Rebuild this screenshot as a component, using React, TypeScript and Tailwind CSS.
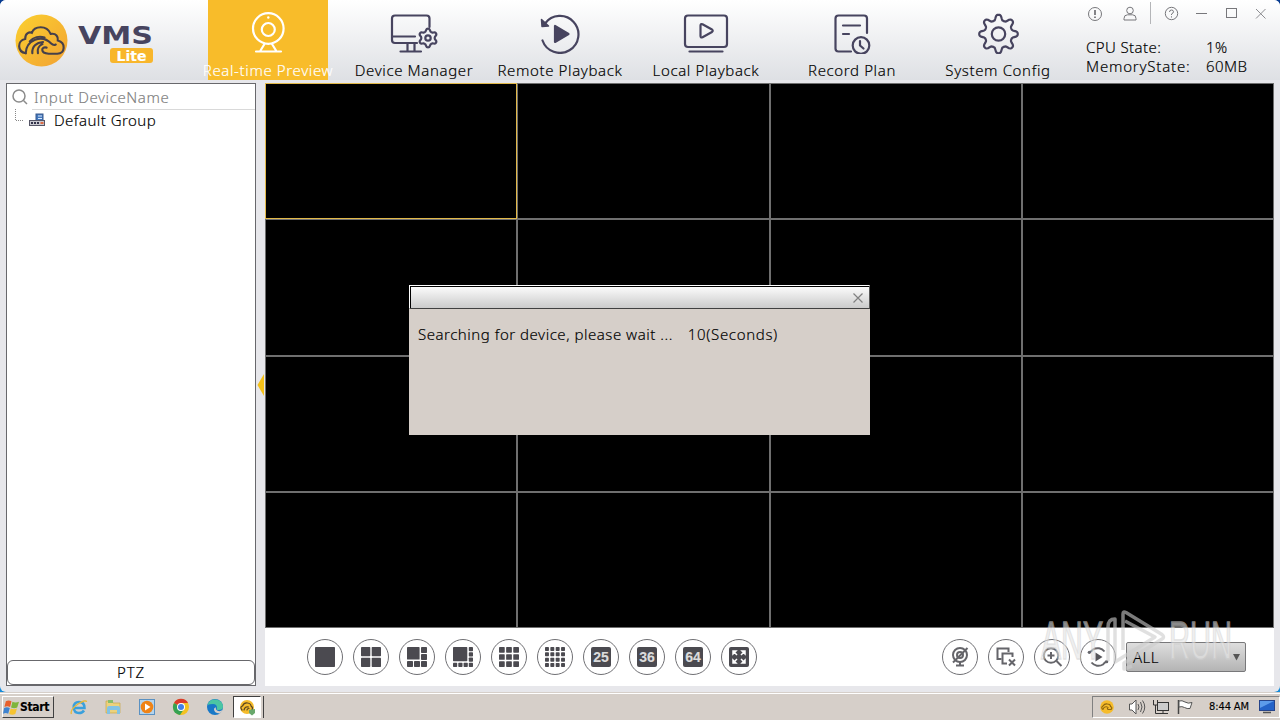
import type { ReactNode } from 'react'
import clsx from 'clsx'

const INK = '#47445f'
const TOOL = '#4b4a50'

// Rounded gear outline: radius swings between mid - amp and mid + amp once per tooth.
function gearPath(cx: number, cy: number, teeth: number, mid: number, amp: number, sharp: number) {
  const pts: string[] = []
  const steps = teeth * 16
  for (let i = 0; i < steps; i++) {
    const a = (i / steps) * Math.PI * 2
    const wave = Math.tanh(sharp * (Math.cos(teeth * a) - 0.15)) / Math.tanh(sharp)
    const r = mid + amp * wave
    pts.push(`${(cx + Math.sin(a) * r).toFixed(2)} ${(cy - Math.cos(a) * r).toFixed(2)}`)
  }
  return `M${pts.join('L')}Z`
}

/* ---------- Header icons (48x44 box) ---------- */

function NavSvg({ color = INK, children }: { color?: string; children: ReactNode }) {
  return (
    <svg
      width="48"
      height="44"
      viewBox="0 0 48 44"
      fill="none"
      stroke={color}
      strokeWidth="2.200"
      strokeLinecap="round"
      strokeLinejoin="round"
    >
      {children}
    </svg>
  )
}

const previewIcon = (
  <NavSvg color="#fff">
    <circle cx="24.300" cy="18.500" r="15.300" />
    <circle cx="24.300" cy="19.500" r="6.500" />
    <path d="M20.500 34L16.500 40.500M28 34L32 40.500M12 41.500H37" />
    <circle cx="24.300" cy="7.500" r="1.200" fill="#fff" stroke="none" />
  </NavSvg>
)

const managerIcon = (
  <NavSvg>
    <path d="M39.500 17V8.500Q39.500 5.500 36.500 5.500H5Q2 5.500 2 8.500V30Q2 33 5 33H27" />
    <path d="M2 26.500H25M17.500 33V41M24.500 33V41M10.500 41.500H31" />
    <path d={gearPath(38, 28, 6, 8.1, 1.3, 1.2)} />
    <circle cx="38" cy="28" r="2.700" />
  </NavSvg>
)

const remoteIcon = (
  <NavSvg>
    <path d="M9 13.500A18.500 18.500 0 1 1 6.500 30.500" />
    <path d="M5.500 9.500L6 16.500L12.500 16Z" fill={INK} strokeWidth="1.500" />
    <path d="M19 16V32L32.500 24Z" fill={INK} />
  </NavSvg>
)

const localIcon = (
  <NavSvg>
    <rect x="3" y="5.500" width="42" height="31.500" rx="3" />
    <path d="M7.500 41.500H40.500" />
    <path d="M18.500 15.500Q18.500 13.500 20.500 14.200L30 19.500Q31.500 20.800 30 22L20.500 27.300Q18.500 28 18.500 26Z" />
  </NavSvg>
)

const planIcon = (
  <NavSvg>
    <path d="M39 23V8.500Q39 5.500 36 5.500H10.500Q7.500 5.500 7.500 8.500V38.500Q7.500 41.500 10.500 41.500H23" />
    <path d="M15 15.500H32M15 24H21" />
    <circle cx="33" cy="35.500" r="8.300" />
    <path d="M32 31V35.500L35.500 38.500" />
  </NavSvg>
)

const configIcon = (
  <NavSvg>
    <path d={gearPath(24.5, 24, 8, 16.7, 2.7, 1.6)} />
    <circle cx="24.500" cy="24" r="6.700" />
  </NavSvg>
)

const navItems = [
  { label: 'Real-time Preview', icon: previewIcon, active: true },
  { label: 'Device Manager', icon: managerIcon },
  { label: 'Remote Playback', icon: remoteIcon },
  { label: 'Local Playback', icon: localIcon },
  { label: 'Record Plan', icon: planIcon },
  { label: 'System Config', icon: configIcon },
]

function CloudWave({ size, color = '#47404a' }: { size: number; color?: string }) {
  return (
    <svg width={size} height={size} viewBox="0 0 52 52" fill="none">
      <defs>
        <linearGradient id="logo" x1="0" y1="0" x2="1" y2="1">
          <stop offset="0" stopColor="#fbd02f" />
          <stop offset="1" stopColor="#f2a233" />
        </linearGradient>
      </defs>
      <circle cx="26" cy="26" r="25.500" fill="url(#logo)" />
      <g stroke={color} strokeWidth="2.100" strokeLinecap="round">
        <path d="M10.500 38.500C2 37 2 26 10 24.500C10 18 14.500 17.500 16.500 18.500C19 11.500 31 10.500 35 19.500C40.500 18.500 42.500 22.500 42 26C50 28 49.500 39 41.500 39H33C24.500 38.500 25.500 31.500 31 33" />
        <path d="M10.500 38.500C11 26 26 19 35.500 29C37 30.500 39 30.500 40 30" />
        <path d="M17 38.500C16.500 32 21 28 27.500 27.500M22.500 38.500C21.500 34.500 23.500 31 27 29.500" />
        <path d="M14.500 27C18 22.500 24 21.500 29 23" />
      </g>
    </svg>
  )
}

function Logo() {
  return (
    <div className="flex w-[195px] shrink-0 pl-[15px] pt-[14px]">
      <CloudWave size={53} />
      <div className="ml-[9px] flex w-[77px] flex-col items-end pt-[7px]">
        <svg width="77" height="26" viewBox="0 0 77 26">
          <text
            x="1"
            y="22.500"
            textLength="75"
            lengthAdjust="spacingAndGlyphs"
            fill={INK}
            fontFamily="DejaVu Sans"
            fontWeight="700"
            fontSize="25"
          >
            VMS
          </text>
        </svg>
        <div className="mt-px mr-px flex h-[15px] w-[43px] items-center justify-center rounded-[3px] bg-[#f8b62b] font-['DejaVu_Sans'] text-[14px] leading-none font-bold text-white">
          Lite
        </div>
      </div>
    </div>
  )
}

function WindowControls() {
  return (
    <svg
      width="190"
      height="26"
      viewBox="0 0 190 26"
      fill="none"
      stroke="#77777b"
      strokeWidth="1"
      className="block"
    >
      <circle cx="14" cy="14" r="6.500" />
      <path d="M14 10V15M14 16.500V18" strokeWidth="1.800" />
      <circle cx="49" cy="10.500" r="3.300" />
      <path d="M43 20V18.500Q43 14.800 46.500 14.800H51.500Q55 14.800 55 18.500V20Z" />
      <path d="M69.500 2V24" stroke="#b4b5b8" />
      <circle cx="90.500" cy="13.500" r="6.200" />
      <path d="M88.500 12Q88.500 10 90.500 10Q92.500 10 92.500 11.800Q92.500 13 90.500 14V15M90.500 16.300V17.500" />
      <path d="M115 13.500H126" />
      <rect x="145.500" y="8.500" width="10" height="9" />
      <path d="M175 9L184.500 18.500M184.500 9L175 18.500" stroke="#8c8c90" />
    </svg>
  )
}

function Header() {
  return (
    <header className="flex h-20 shrink-0 bg-linear-to-b from-white to-[#dee0e4]">
      <Logo />
      <nav className="flex">
        {navItems.map((item) => (
          <div key={item.label} className="flex w-[146px] justify-center">
            <div
              className={clsx(
                'flex h-20 w-[120px] flex-col items-center pt-2.5',
                item.active ? 'bg-[#f8bc2a] text-white' : 'text-black',
              )}
            >
              {item.icon}
              <span className="mt-[7px] text-[15px] leading-[19px] whitespace-nowrap tracking-[0.620px]">
                {item.label}
              </span>
            </div>
          </div>
        ))}
      </nav>
      <div className="ml-[10px] flex flex-col">
        <WindowControls />
        <div className="mt-3 ml-[5px] grid grid-cols-[120px_1fr] text-[15px] leading-[19px] tracking-[0.400px]">
          <span>CPU State:</span>
          <span>1%</span>
          <span className="tracking-[0.800px]">MemoryState:</span>
          <span>60MB</span>
        </div>
      </div>
    </header>
  )
}

function DevicePanel() {
  return (
    <aside className="flex w-[250px] shrink-0 flex-col border border-[#68686c] bg-white">
      <div className="flex h-[26px] items-center pl-1">
        <svg width="18" height="18" viewBox="0 0 18 18" fill="none" stroke="#8b8b8b" strokeWidth="1.500">
          <circle cx="8" cy="8" r="6" />
          <path d="M12.500 12.500L16 16" />
        </svg>
        <div className="ml-[3px] flex h-full flex-1 items-center border-b border-[#d9d9d9] pt-0.5 pl-0.5 text-[15px] tracking-[0.600px] text-[#808080]">
          Input DeviceName
        </div>
      </div>
      <div className="flex h-5 items-center">
        <svg width="40" height="22" viewBox="0 0 40 22">
          <path d="M8.500 0V11M9 11.500H16" stroke="#888" strokeDasharray="1 1" fill="none" />
          <rect x="29" y="5" width="7" height="8" fill="#4277bc" stroke="#39598b" />
          <path d="M31 7H35M31 9.500H35" stroke="#d9eaff" />
          <rect x="22.500" y="11.500" width="15" height="5" fill="#c9c9d0" stroke="#555566" />
          <path d="M24 14H26M27 14H29M30 14H32" stroke="#33334a" strokeWidth="2" />
          <path d="M33.500 14H36.500" stroke="#dd6b43" strokeWidth="2" />
        </svg>
        <span className="ml-[7px] text-[15px] tracking-[0.450px]">Default Group</span>
      </div>
      <div className="flex-1" />
      <button className="h-[25px] rounded-md border border-[#68686c] text-[15px] leading-none tracking-[0.800px]">
        PTZ
      </button>
    </aside>
  )
}

function VideoGrid() {
  return (
    <div className="grid h-[545px] grid-cols-4 grid-rows-4 bg-black">
      {Array.from({ length: 16 }, (_, i) => (
        <div key={i} className={clsx('border', i === 0 ? 'border-[#e2b94a]' : 'border-[#6f6f6f]')} />
      ))}
    </div>
  )
}

/* ---------- Bottom toolbar ---------- */

// Each block is x, y, size inside a 20x20 square.
type Block = [number, number, number]

function evenBlocks(n: number, gap: number): Block[] {
  const size = (20 - gap * (n - 1)) / n
  return Array.from({ length: n * n }, (_, i) => [
    (i % n) * (size + gap),
    Math.floor(i / n) * (size + gap),
    size,
  ])
}

const six: Block[] = [
  [0, 0, 12.6],
  [14, 0, 6],
  [14, 7, 6],
  [0, 14, 6],
  [7, 14, 6],
  [14, 14, 6],
]

const eight: Block[] = [
  [0, 0, 14.3],
  [15.8, 0, 4.2],
  [15.8, 5.3, 4.2],
  [15.8, 10.6, 4.2],
  [0, 15.8, 4.2],
  [5.3, 15.8, 4.2],
  [10.6, 15.8, 4.2],
  [15.8, 15.8, 4.2],
]

function Blocks({ blocks }: { blocks: Block[] }) {
  return (
    <svg width="20" height="20" viewBox="0 0 20 20" fill={TOOL}>
      {blocks.map(([x, y, s], i) => (
        <rect key={i} x={x} y={y} width={s} height={s} rx="0.700" />
      ))}
    </svg>
  )
}

function CountTile({ value }: { value: string }) {
  return (
    <span className="flex size-5 items-center justify-center rounded-[2px] bg-[#4b4a50] font-['Liberation_Sans'] text-[14px] leading-none font-bold text-[#dcdcdc]">
      {value}
    </span>
  )
}

const fullscreenIcon = (
  <svg width="20" height="20" viewBox="0 0 20 20">
    <rect width="20" height="20" rx="2" fill={TOOL} />
    <g fill="#fff" stroke="#fff" strokeWidth="1.500">
      <path d="M4 4H7L4 7ZM5 5L8 8" />
      <path d="M16 4H13L16 7ZM15 5L12 8" />
      <path d="M4 16H7L4 13ZM5 15L8 12" />
      <path d="M16 16H13L16 13ZM15 15L12 12" />
    </g>
  </svg>
)

const layoutButtons: ReactNode[] = [
  <Blocks blocks={[[0, 0, 20]]} />,
  <Blocks blocks={evenBlocks(2, 1.4)} />,
  <Blocks blocks={six} />,
  <Blocks blocks={eight} />,
  <Blocks blocks={evenBlocks(3, 1.4)} />,
  <Blocks blocks={evenBlocks(4, 1.4)} />,
  <CountTile value="25" />,
  <CountTile value="36" />,
  <CountTile value="64" />,
  fullscreenIcon,
]

function ToolSvg({ children }: { children: ReactNode }) {
  return (
    <svg width="22" height="22" viewBox="0 0 22 22" fill="none" stroke="#65656a" strokeWidth="2">
      {children}
    </svg>
  )
}

const actionButtons: ReactNode[] = [
  <ToolSvg>
    <circle cx="11" cy="9" r="7" />
    <circle cx="11" cy="9" r="3" />
    <path d="M11 16V19M7 19.500H15M18.500 2L4 16.500" />
  </ToolSvg>,
  <ToolSvg>
    <path d="M6.500 13H2.500V2.500H13.500V6" />
    <path d="M12 17.500H7.500V7.500H17.500V11" />
    <path d="M14 13.500L20 19.500M20 13.500L14 19.500" />
  </ToolSvg>,
  <ToolSvg>
    <circle cx="10" cy="9.500" r="7.300" />
    <path d="M15.500 15L20.500 20M6.500 9.500H13.500M10 6V13" />
  </ToolSvg>,
  <ToolSvg>
    <path d="M2.500 6.500Q5 5 6 3.500A8.800 8.800 0 0 1 17.500 5.500" />
    <path d="M19.500 15.500Q17.500 16.500 16 18.500A8.800 8.800 0 0 1 4.500 16.500" />
    <circle cx="2.300" cy="6.300" r="1.600" fill="#65656a" stroke="none" />
    <circle cx="19.700" cy="15.700" r="1.600" fill="#65656a" stroke="none" />
    <path d="M8.500 6.500V15.500L15.500 11Z" fill="#55555a" stroke="none" />
  </ToolSvg>,
]

function RoundButton({ children }: { children: ReactNode }) {
  return (
    <button className="flex size-9 items-center justify-center rounded-full border border-[#707074] bg-white">
      {children}
    </button>
  )
}

function Toolbar() {
  return (
    <div className="flex h-[58px] items-center bg-white pr-7 pl-[42px]">
      <div className="flex gap-2.5">
        {layoutButtons.map((icon, i) => (
          <RoundButton key={i}>{icon}</RoundButton>
        ))}
      </div>
      <div className="ml-auto flex items-center gap-2.5">
        {actionButtons.map((icon, i) => (
          <RoundButton key={i}>{icon}</RoundButton>
        ))}
        <div className="flex h-[30px] w-[120px] items-center justify-between rounded-[2px] border border-[#78787a] bg-linear-to-b from-[#dedede] to-[#b4b4b4] pr-1 pl-[6px] text-[15px] tracking-[0.500px]">
          <span>ALL</span>
          <svg width="9" height="8" viewBox="0 0 9 8">
            <path d="M1 1H8L4.500 7.500Z" fill="#555" />
          </svg>
        </div>
      </div>
    </div>
  )
}

function SearchDialog() {
  return (
    <div className="absolute top-[285px] left-[409px] h-[150px] w-[461px] bg-[#d6cfc9]">
      <div className="flex h-6 items-center justify-end border-t border-r border-b border-l border-t-white border-r-[#555] border-b-[#404040] border-l-white">
        <div className="flex h-full flex-1 items-center justify-end border-t border-l border-black bg-linear-to-b from-[#fbfbfb] to-[#cbcbcb] pr-[5px]">
          <svg width="12" height="12" viewBox="0 0 12 12" stroke="#808080" strokeWidth="1.200">
            <path d="M1.500 1.500L10.500 10.500M10.500 1.500L1.500 10.500" />
          </svg>
        </div>
      </div>
      <p className="pt-[14px] pl-[9px] text-[15px] leading-[22px] whitespace-pre">
        <span className="tracking-[0.520px]">Searching for device, please wait ...</span>
        <span className="ml-[15px] tracking-[0.650px]">10(Seconds)</span>
      </p>
    </div>
  )
}

function Watermark() {
  return (
    <svg
      className="pointer-events-none absolute top-[605px] left-[1036px]"
      width="200"
      height="75"
      viewBox="0 0 200 75"
      fill="none"
      opacity="0.6"
    >
      <g
        fill="#e6e6e6"
        stroke="#cfcfcf"
        strokeWidth="1.400"
        fontFamily="Liberation Sans Narrow, Liberation Sans"
        fontSize="53"
      >
        <text x="5" y="54" textLength="62" lengthAdjust="spacingAndGlyphs">
          ANY
        </text>
        <text x="133" y="54" textLength="63" lengthAdjust="spacingAndGlyphs">
          RUN
        </text>
      </g>
      <g stroke="#cdcdcd" strokeWidth="3.500" strokeLinejoin="round">
        <path d="M87 45V9Q87 6 90 7.500L126 29.500Q129 32 126 34L88 58V64L96 61" />
        <path d="M89 16L119 32L79 57V14Q72 14 72 22V56" />
      </g>
    </svg>
  )
}

/* ---------- Windows taskbar ---------- */

function StartFlag() {
  return (
    <svg width="17" height="17" viewBox="0 0 18 17" className="shrink-0">
      <path d="M3 2Q6 0 9 2L7.500 8Q4.500 6.500 1.500 8Z" fill="#e8602c" />
      <path d="M10 2.500Q13 4 17 2.500L15 8.500Q12 10 8.500 8.500Z" fill="#7fb53c" />
      <path d="M1.200 9Q4 7.500 7.200 9L5.500 15Q3 13.500 0 15Z" fill="#3f83cf" />
      <path d="M8.200 9.500Q11.500 11 14.800 9.500L13 15.500Q10 17 6.500 15.500Z" fill="#f6c330" />
    </svg>
  )
}

const taskIcons: ReactNode[] = [
  <svg width="18" height="18" viewBox="0 0 18 18" fill="none">
    <path d="M4 10H14.500Q14.500 4 9 4Q3.700 4 3.700 9.500Q4 15 9 15Q12.500 15 14 12.500" stroke="#3aa0dc" strokeWidth="2.500" />
    <path d="M1.500 16Q-0.500 12 8 6Q16 1 16.500 4" stroke="#e8b93c" strokeWidth="1.400" />
  </svg>,
  <svg width="18" height="18" viewBox="0 0 18 18">
    <path d="M2 3H8L9 5H16V15H2Z" fill="#ecd27c" stroke="#c9a849" strokeWidth="0.700" />
    <path d="M4 2H9V5H4Z" fill="#88bd69" />
    <path d="M3 10Q3 8 5 8H14Q16 8 16 10V16H13V12H6V16H3Z" fill="#82c3e4" />
  </svg>,
  <svg width="18" height="18" viewBox="0 0 18 18">
    <rect x="1.500" y="1.500" width="15" height="15" fill="#b4d4ed" stroke="#5a91c2" />
    <circle cx="9" cy="9" r="6.300" fill="#ef8316" />
    <path d="M7 5.500V12.500L12.500 9Z" fill="#fff" />
  </svg>,
  <svg width="18" height="18" viewBox="0 0 18 18">
    <circle cx="9" cy="9" r="8" fill="#f3c220" />
    <path d="M9 9L2 5A8 8 0 0 1 16 5H9Z" fill="#da3b2b" />
    <path d="M9 9L2 5A8 8 0 0 0 8 17L12 11Z" fill="#36a253" />
    <circle cx="9" cy="9" r="4" fill="#fff" />
    <circle cx="9" cy="9" r="3" fill="#4180e8" />
  </svg>,
  <svg width="18" height="18" viewBox="0 0 18 18">
    <circle cx="9" cy="9" r="8" fill="#1878c7" />
    <path d="M1.500 7A8 8 0 0 1 17 8.500Q17 12 12.500 12Q10 12 11 10Q11 6 7 6Q3.500 6 1.500 7Z" fill="#4bc6a3" />
    <path d="M10 9.500Q9 11 11 12.500Q14 14 16.500 12Q16 15 13.500 15.500Q8 15 8 11Q8.500 9 10 9.500Z" fill="#d6cfc9" />
  </svg>,
]

function Taskbar() {
  return (
    <footer className="flex h-7 shrink-0 items-start border-t border-[#d6cfc9] bg-[#d6cfc9]">
      <div className="flex h-full w-full items-center border-t border-white pl-[2px]">
        <button className="flex h-[22px] w-[52px] items-center border border-t-white border-r-[#404040] border-b-[#404040] border-l-white font-['DejaVu_Sans_Condensed'] text-[12px] font-bold tracking-[-0.300px]">
          <StartFlag />
          Start
        </button>
        <div className="ml-4 flex gap-4">
          {taskIcons.map((icon, i) => (
            <span key={i}>{icon}</span>
          ))}
        </div>
        <div className="ml-[9px] flex h-[22px] w-[28px] items-center justify-center border border-t-[#404040] border-r-white border-b-white border-l-[#404040] bg-white">
          <svg width="18" height="18" viewBox="0 0 18 18" fill="none" strokeLinecap="round">
            <circle cx="9" cy="9" r="7" fill="#f6bc2b" />
            <path d="M4 12Q1.500 9 4.500 8Q6 4.500 9.500 5Q13 5.500 13 8Q15.500 9.500 14 12M6 12Q7 8 10.500 9M9 12Q9 10.500 11 10.500" stroke="#5a4520" strokeWidth="1.200" />
            <path d="M11 12L17 11V15L14 17.500L11 15Z" fill="#69a86c" />
          </svg>
        </div>
        <div className="ml-0.5 h-[22px] w-px bg-[#404040]" />
        <div className="ml-auto flex h-[22px] w-[188px] items-center border border-t-[#808080] border-r-white border-b-white border-l-[#808080] pl-[7px]">
          <svg width="14" height="14" viewBox="0 0 14 14" fill="none">
            <circle cx="7" cy="7" r="6.800" fill="#f6bc2b" />
            <path d="M3 9.500Q0.500 7.500 3 6Q4.500 3.500 7.500 4Q10.500 4 10.500 6.500Q13 7.500 11 9.500H8Q6.500 8 8.500 7.500M3 9.500Q4 6 7.500 7" stroke="#8b6410" strokeWidth="1.100" />
          </svg>
          <svg width="88" height="20" viewBox="0 0 88 20" fill="none" stroke="#555" className="ml-px">
            <path d="M14.500 7H17L21 3V17L17 13H14.500Z" fill="#fff" />
            <path d="M23 7Q25 10 23 13M25.500 5Q28.500 10 25.500 15M27.500 3.500Q32 10 27.500 16.500" />
            <rect x="42.500" y="5.500" width="11" height="8" fill="#ccc" stroke="#333" />
            <path d="M45 16.500H53M48 14V16" stroke="#333" />
            <path d="M38.500 3V8H42.500V3M40.500 8V16.500H45" stroke="#333" />
            <path d="M63.500 3V17" stroke="#444" strokeWidth="1.500" />
            <path d="M64 4Q67 3 70 5Q73 7 77 5.500L75 11.500Q72 12 69.500 10.500Q67 9 64 10Z" fill="#fff" />
          </svg>
          <span className="ml-[6px] font-['DejaVu_Sans_Condensed'] text-[11px] font-normal whitespace-nowrap tracking-[-0.100px]">
            8:44 AM
          </span>
          <svg width="16" height="14" viewBox="0 0 16 14" className="ml-auto mr-1 shrink-0">
            <rect x="0.500" y="0.500" width="15" height="10" fill="#2463c8" stroke="#26448a" />
            <path d="M1 1H15L1 8Z" fill="#5c9bea" />
            <path d="M4 12.500H12" stroke="#555" strokeWidth="1.500" />
          </svg>
        </div>
      </div>
    </footer>
  )
}

export default function App() {
  return (
    <div className="relative flex h-[720px] w-[1280px] flex-col overflow-hidden bg-linear-to-b from-[#083c91] to-[#168fdd] font-['Noto_Sans',sans-serif] font-light text-black [-webkit-text-stroke:0.15px]">
      <div className="flex h-[692px] flex-col overflow-hidden rounded-md bg-[#e7e7eb]">
        <Header />
        <main className="mt-[3px] flex h-[603px] pr-1.5 pl-1.5">
          <DevicePanel />
          <div className="flex w-[9px] items-center justify-end pr-px">
            <svg width="7" height="22" viewBox="0 0 7 22">
              <path d="M7 0V22L0.500 11Z" fill="#f5c118" />
            </svg>
          </div>
          <section className="flex flex-1 flex-col">
            <VideoGrid />
            <Toolbar />
          </section>
        </main>
      </div>
      <Taskbar />
      <SearchDialog />
      <Watermark />
    </div>
  )
}
